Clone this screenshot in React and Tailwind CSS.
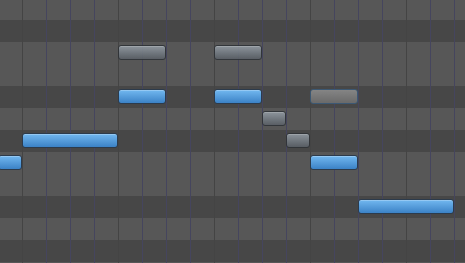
import React from "react";

const rows = ["L","D","L","L","D","L","D","L","L","D","L","D","L"];
const cols = Array.from({ length: 21 }, (_, i) => i);

const notes = [
  { r: 2, x: 118, w: 48, t: "gray" },
  { r: 2, x: 214, w: 48, t: "gray" },
  { r: 4, x: 118, w: 48, t: "blue" },
  { r: 4, x: 214, w: 48, t: "blue" },
  { r: 4, x: 310, w: 48, t: "sel" },
  { r: 5, x: 262, w: 24, t: "gray" },
  { r: 6, x: 286, w: 24, t: "gray" },
  { r: 6, x: 22, w: 96, t: "blue" },
  { r: 7, x: -2, w: 24, t: "blue" },
  { r: 7, x: 310, w: 48, t: "blue" },
  { r: 9, x: 358, w: 96, t: "blue" },
];

const noteCls = {
  blue: "border-[#2c3b4c] bg-linear-to-b from-[#72b8f0] to-[#3b82c6] shadow-[inset_0_1px_0_rgba(255,255,255,0.25)]",
  gray: "border-[#2f3337] bg-linear-to-b from-[#939ca4] to-[#5a6067] opacity-90 shadow-[inset_0_1px_0_rgba(255,255,255,0.2)]",
  sel: "border-[#3b5a78] bg-linear-to-b from-[#8c8c8c] to-[#6e6e6e] opacity-90",
};

export default function App() {
  return (
    <div className="relative w-[465px] h-[263px] overflow-hidden bg-[#575757]">
      <div className="flex flex-col -mt-[2px]">
        {rows.map((k, i) => (
          <div key={i} className={"h-[22px] shrink-0 " + (k === "D" ? "bg-[#474747]" : "bg-[#575757]")} />
        ))}
      </div>
      <div className="absolute inset-0 flex -ml-[1px]">
        {cols.map((c) => (
          <div
            key={c}
            className={
              "w-[24px] shrink-0 h-full border-r " +
              (c % 4 === 0 ? "border-[#444444]" : "border-[#45455e]")
            }
          />
        ))}
      </div>
      {notes.map((n, i) => (
        <div
          key={i}
          className={"absolute h-[15px] rounded-[3px] border " + noteCls[n.t]}
          style={{ left: n.x, top: -2 + 22 * n.r + 3, width: n.w }}
        />
      ))}
    </div>
  );
}
